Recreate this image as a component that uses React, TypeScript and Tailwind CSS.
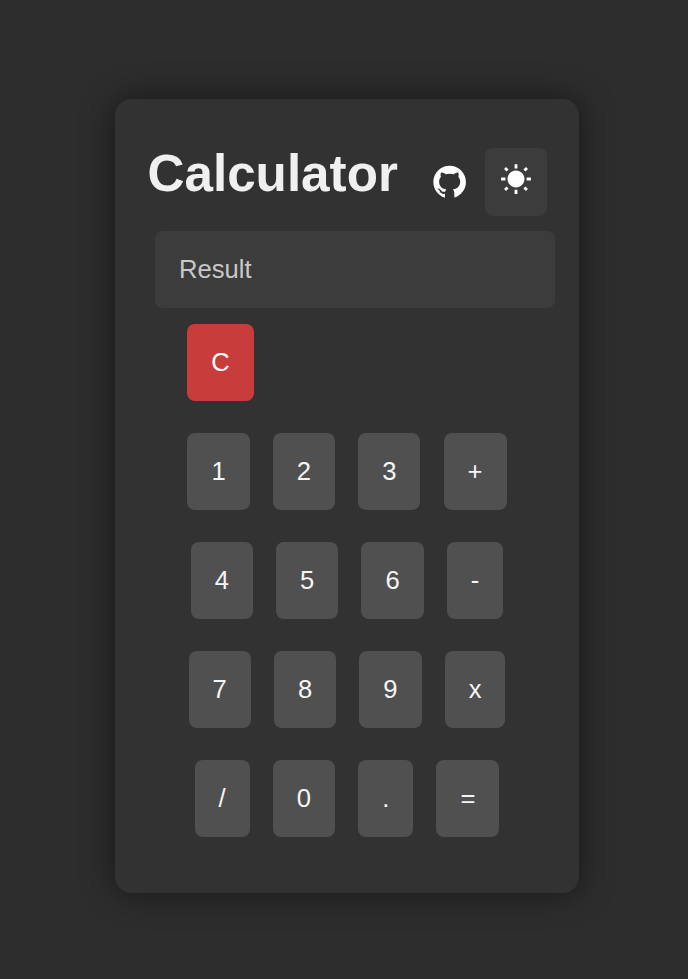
import { AiFillGithub } from "react-icons/ai";
import { IoMdSunny } from "react-icons/io";

const rows = [
  ["C"],
  ["1", "2", "3", "+"],
  ["4", "5", "6", "-"],
  ["7", "8", "9", "x"],
  ["/", "0", ".", "="],
];

function Key({ label }: { label: string }) {
  const color = label === "C" ? "bg-[#c83c3c] text-white" : "bg-[#505050] text-[#f5f5f5]";
  return (
    <button className={`h-[77px] rounded-lg px-6 text-[25.6px] leading-[29px] ${color}`}>
      {label}
    </button>
  );
}

export default function App() {
  return (
    <main className="flex h-[979px] w-full justify-center bg-[#2d2d2d] pt-[99px] pl-[6px] font-['Liberation_Sans',Arial,sans-serif]">
      <section className="flex h-[794px] w-[464px] flex-col rounded-2xl bg-[#323232] pt-[49px] shadow-[0_0_32px_rgba(0,0,0,0.5)]">
        <header className="flex h-[68px] items-start pl-[32.5px]">
          <h1 className="mt-[-3px] w-[283.5px] text-[51.2px] leading-[58px] font-bold text-[#f0f0f0]">Calculator</h1>
          <a aria-label="GitHub" className="mt-[15px] w-[54px] text-white">
            <AiFillGithub size={37.3} />
          </a>
          <button aria-label="Theme" className="flex h-[68px] w-[62px] justify-center rounded-lg bg-[#3c3c3c] pt-[14px] text-white">
            <IoMdSunny size={34} />
          </button>
        </header>
        <input
          placeholder="Result"
          className="mt-[15px] ml-10 h-[77px] w-[400px] shrink-0 rounded-lg bg-[#3c3c3c] px-6 text-[25.6px] text-white placeholder:text-[#c8c8c8]"
        />
        <div className="mt-4 flex flex-col gap-8">
          {rows.map((row) => (
            <div
              key={row[0]}
              className={`flex gap-[23.125px] ${row.length === 1 ? "pl-[72.3px]" : "justify-center"}`}
            >
              {row.map((label) => (
                <Key key={label} label={label} />
              ))}
            </div>
          ))}
        </div>
      </section>
    </main>
  );
}
